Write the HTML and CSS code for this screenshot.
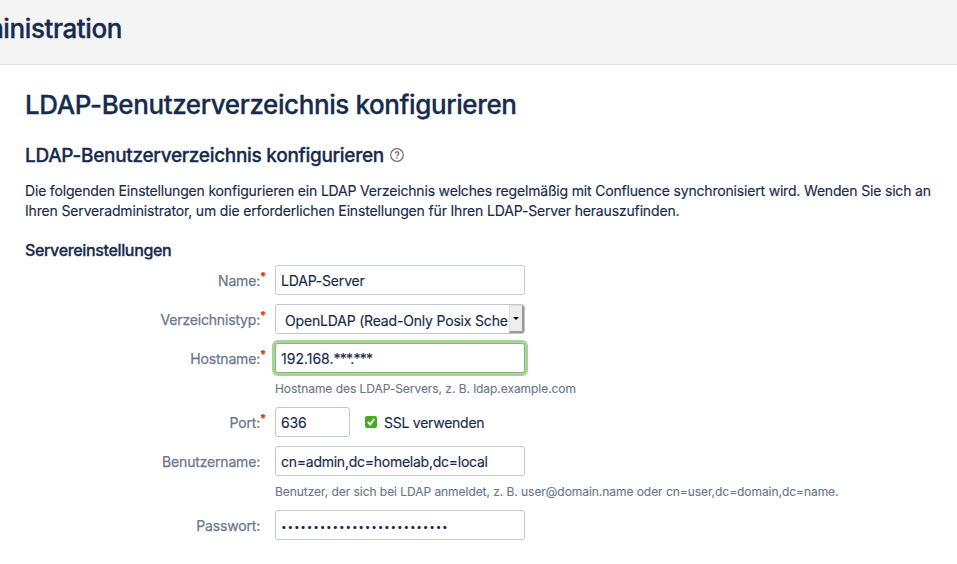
FILE: index.html
```html
<!DOCTYPE html>
<html lang="de">
<head>
<meta charset="utf-8">
<title>LDAP-Benutzerverzeichnis konfigurieren</title>
<link rel="stylesheet" href="styles.css">
</head>
<body>
<header class="page-header"><span class="page-header-title">ministration</span></header>
<main class="content">
<h1>LDAP-Benutzerverzeichnis konfigurieren</h1>
<h2><span>LDAP-Benutzerverzeichnis konfigurieren</span>
<svg class="help" viewBox="0 0 14 14" width="14" height="14"><circle cx="7" cy="7" r="6.3" fill="none" stroke="#707070" stroke-width="1.2"/><path d="M5.3 5.5a1.75 1.75 0 1 1 2.5 1.6q-.8.4-.8 1.2" fill="none" stroke="#707070" stroke-width="1.3"/><circle cx="7" cy="10.1" r=".8" fill="#707070"/></svg></h2>
<p class="intro">Die folgenden Einstellungen konfigurieren ein LDAP Verzeichnis welches regelmäßig mit Confluence synchronisiert wird. Wenden Sie sich an<br><span class="intro-end">Ihren Serveradministrator, um die erforderlichen Einstellungen für Ihren LDAP-Server herauszufinden.</span></p>
<h3>Servereinstellungen</h3>
<form class="form">
<div class="row"><label class="label required">Name:</label><div class="field">LDAP-Server</div></div>
<div class="row"><label class="label required">Verzeichnistyp:</label><div class="field select"><span class="select-text">OpenLDAP (Read-Only Posix Sche</span><span class="arrow"></span></div></div>
<div class="row with-hint"><label class="label required">Hostname:</label><div class="group"><div class="field focused">192.168.<span class="mask">***.***</span></div><div class="hint">Hostname des LDAP-Servers, z. B. ldap.example.com</div></div></div>
<div class="row"><label class="label required">Port:</label><div class="field short">636</div><span class="check"><svg viewBox="0 0 12 12" width="12" height="12"><path d="M2.8 5.8 5.2 8.6 9.2 3" fill="none" stroke="#fff" stroke-width="1.8"/></svg></span><span class="ssl">SSL verwenden</span></div>
<div class="row with-hint"><label class="label">Benutzername:</label><div class="group"><div class="field account">cn=admin,dc=homelab,dc=local</div><div class="hint">Benutzer, der sich bei LDAP anmeldet, z. B. user@domain.name oder cn=user,dc=domain,dc=name.</div></div></div>
<div class="row"><label class="label">Passwort:</label><div class="field password">••••••••••••••••••••••••••</div></div>
</form>
</main>
</body>
</html>
```
FILE: styles.css
```css
* { box-sizing: border-box; }
body { margin: 0; height: 564px; overflow: hidden; background: #fff; color: #172b4d; font: 14px/20px Inter, sans-serif; letter-spacing: -0.18px; -webkit-text-stroke: 0.15px currentColor; }
.page-header { height: 65px; background: #f4f4f4; border-bottom: 1px solid #dcdfe6; display: flex; padding-top: 14px; }
.page-header-title { font-size: 26px; font-weight: 500; line-height: 30px; letter-spacing: -0.4px; width: 122px; display: flex; justify-content: flex-end; white-space: nowrap; -webkit-text-stroke-width: 0.35px; }
.content { padding: 25px 0 0 25px; white-space: nowrap; }
h1, h2, h3, p { margin: 0; }
h1, h2, h3 { -webkit-text-stroke-width: 0.3px; }
h1 { font-size: 26px; line-height: 30px; font-weight: 500; letter-spacing: -0.4px; }
h2 { display: flex; align-items: center; gap: 6px; margin-top: 24px; font-size: 19px; line-height: 24px; font-weight: 500; letter-spacing: -0.3px; }
.help { margin-top: -2px; }
.intro { margin-top: 13px; }
.intro-end { letter-spacing: -0.16px; }
h3 { margin-top: 19px; font-size: 16px; line-height: 20px; font-weight: 500; letter-spacing: -0.35px; }
.form { margin-top: 5px; }
.row { display: flex; height: 39px; align-items: flex-start; }
.row.with-hint { height: 64px; }
.label { width: 235px; padding-top: 6px; display: flex; justify-content: flex-end; color: #6b778c; letter-spacing: -0.18px; -webkit-text-stroke-width: 0.25px; }
.required::after { content: "*"; width: 5px; margin-right: -5px; color: #de350b; font-size: 11px; font-weight: 700; line-height: 10px; }
.field { margin-left: 15px; width: 250px; height: 30px; border: 1px solid #c1c7d0; border-radius: 3px; padding: 5px; line-height: 20px; overflow: hidden; background: #fff; }
.label + .group { margin-left: 15px; }
.group .field { margin-left: 0; }
.short { width: 75px; }
.focused { border-color: #85b77b; box-shadow: 0 0 0 3px #a5d697; letter-spacing: 0; }
.mask { letter-spacing: -0.8px; }
.account { letter-spacing: -0.25px; }
.hint { margin-top: 6px; font-size: 12px; line-height: 20px; letter-spacing: -0.05px; color: #6b778c; }
.select { display: flex; padding: 0; }
.select-text { width: 233px; padding: 6px 0 0 9px; overflow: hidden; letter-spacing: -0.18px; }
.arrow { width: 15px; height: 28px; background: #eee; border: solid; border-width: 1px 2px 2px 1px; border-color: #ddd #999 #999 #ddd; display: flex; align-items: center; justify-content: center; }
.arrow::after { content: ""; border: 3px solid transparent; border-top: 3px solid #000; border-bottom: 0; }
.check { width: 12px; height: 12px; margin: 9px 7px 0 15px; border-radius: 2px; background: #44ad25; display: flex; }
.ssl { padding-top: 6px; letter-spacing: -0.25px; }
.password { font-size: 10px; letter-spacing: 0.82px; -webkit-text-stroke-width: 0; }
```
